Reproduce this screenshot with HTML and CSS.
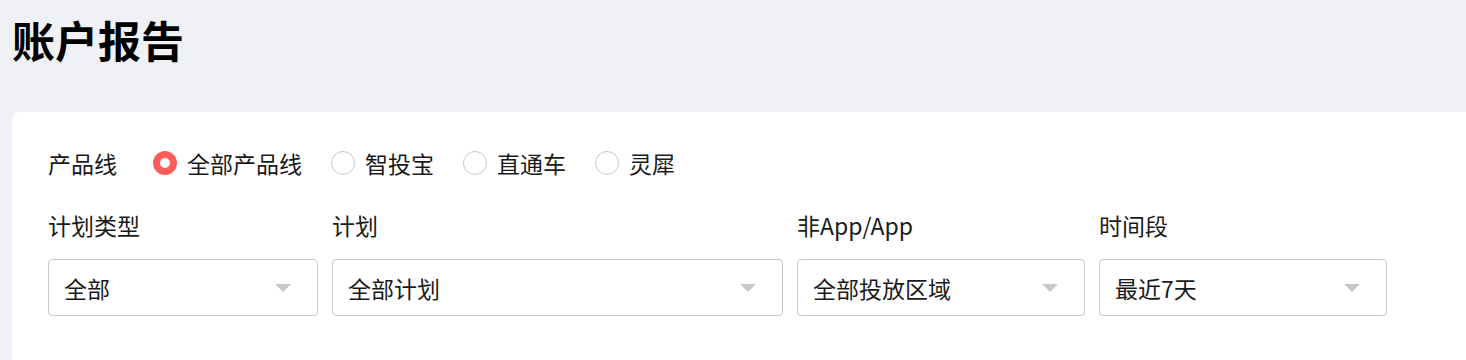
FILE: index.html
```html
<!DOCTYPE html>
<html>
  <head>
    <meta name="viewport" content="width=device-width, initial-scale=1.0">
    <title>账户报告</title>
    <link rel="stylesheet" href="styles.css">
  </head>
  <body>
    <h1 class="title">账户报告</h1>
    <div class="card">
      <div class="radio-row">
        <span class="row-label">产品线</span>
        <label class="radio checked"><span class="dot"></span>全部产品线</label>
        <label class="radio"><span class="dot"></span>智投宝</label>
        <label class="radio"><span class="dot"></span>直通车</label>
        <label class="radio"><span class="dot"></span>灵犀</label>
      </div>
      <div class="filters">
        <div class="field f-type">
          <div class="field-label">计划类型</div>
          <div class="select">全部<span class="arrow"></span></div>
        </div>
        <div class="field f-plan">
          <div class="field-label">计划</div>
          <div class="select">全部计划<span class="arrow"></span></div>
        </div>
        <div class="field f-app">
          <div class="field-label">非App/App</div>
          <div class="select">全部投放区域<span class="arrow"></span></div>
        </div>
        <div class="field f-time">
          <div class="field-label">时间段</div>
          <div class="select">最近7天<span class="arrow"></span></div>
        </div>
      </div>
    </div>
  </body>
</html>
```

FILE: styles.css
```css
body {
  margin: 0;
  padding: 0 0 0 12px;
  background-color: #f0f1f4;
  font-family: "Noto Sans CJK SC", "Noto Sans", sans-serif;
  color: #1a1a1a;
  overflow: hidden;
}
.title {
  margin: 0;
  padding-top: 9px;
  height: 112px;
  box-sizing: border-box;
  font-size: 43px;
  line-height: 60px;
  font-weight: 700;
  color: #000;
}
.card {
  background-color: #fff;
  border-radius: 8px 0 0 0;
  padding: 35px 36px 40px;
  height: 248px;
  box-sizing: border-box;
}
.radio-row {
  display: flex;
  align-items: center;
  height: 32px;
  font-size: 23px;
}
.row-label {
  margin-right: 36px;
}
.radio {
  display: flex;
  align-items: center;
  margin-right: 29px;
}
.radio .dot {
  width: 22px;
  height: 22px;
  border: 1px solid #c3c8d2;
  border-radius: 50%;
  margin-right: 10px;
  box-sizing: content-box;
}
.radio.checked .dot {
  width: 10px;
  height: 10px;
  border: 7px solid #ff5c5c;
}
.filters {
  display: flex;
  gap: 14px;
  margin-top: 30px;
}
.field-label {
  font-size: 23px;
  line-height: 32px;
  margin-bottom: 18px;
}
.select {
  display: flex;
  align-items: center;
  justify-content: space-between;
  height: 57px;
  box-sizing: border-box;
  border: 1px solid #c3c8d2;
  border-radius: 4px;
  padding: 0 26px 0 15px;
  font-size: 23px;
}
.arrow {
  width: 0;
  height: 0;
  border-left: 8px solid transparent;
  border-right: 8px solid transparent;
  border-top: 8px solid #c8c8c8;
}
.f-type { width: 270px; }
.f-plan { width: 451px; }
.f-app { width: 288px; }
.f-time { width: 288px; }
```
